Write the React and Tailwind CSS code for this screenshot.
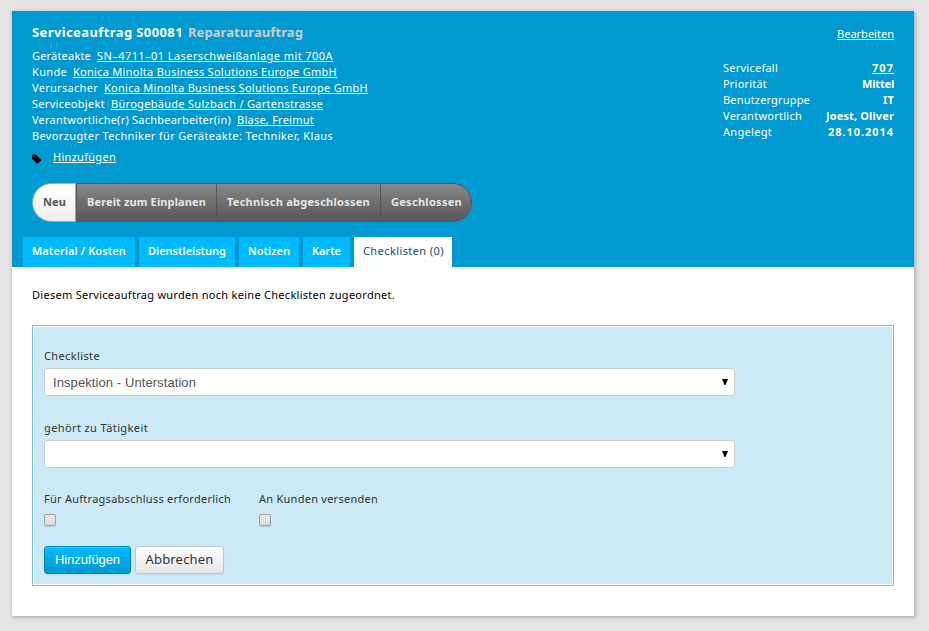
import React from 'react';

const records = [
  { label: 'Geräteakte', value: 'SN–4711–01 Laserschweißanlage mit 700A', l: 'w-[59px]', v: 'w-[236px]' },
  { label: 'Kunde', value: 'Konica Minolta Business Solutions Europe GmbH', l: 'w-[35px]', v: 'w-[264px]' },
  { label: 'Verursacher', value: 'Konica Minolta Business Solutions Europe GmbH', l: 'w-[66px]', v: 'w-[264px]' },
  { label: 'Serviceobjekt', value: 'Bürogebäude Sulzbach / Gartenstrasse', l: 'w-[73px]', v: 'w-[212px]' },
  { label: 'Verantwortliche(r) Sachbearbeiter(in)', value: 'Blase, Freimut', l: 'w-[199px]', v: 'w-[77px]' },
];

const facts = [
  { label: 'Servicefall', value: '707', l: 'w-[55px]', v: 'w-[22px] underline' },
  { label: 'Priorität', value: 'Mittel', l: 'w-[44px]', v: 'w-[32px]' },
  { label: 'Benutzergruppe', value: 'IT', l: 'w-[87px]', v: 'w-[11px]' },
  { label: 'Verantwortlich', value: 'Joest, Oliver', l: 'w-[79px]', v: 'w-[68px]' },
  { label: 'Angelegt', value: '28.10.2014', l: 'w-[49px]', v: 'w-[66px]' },
];

const tabs = [
  { label: 'Material / Kosten', box: 'w-[112px]', text: 'w-[94px]' },
  { label: 'Dienstleistung', box: 'w-[96px]', text: 'w-[78px]' },
  { label: 'Notizen', box: 'w-[60px]', text: 'w-[42px]' },
  { label: 'Karte', box: 'w-[47px]', text: 'w-[29px]' },
];

// Spreads a label's letters so that it fills the width given by its class.
function Label({ children, className = '' }) {
  const box = React.useRef(null);
  const [spacing, setSpacing] = React.useState(0);
  React.useLayoutEffect(() => {
    const el = box.current;
    const natural = el.firstChild.getBoundingClientRect().width;
    setSpacing((el.clientWidth - natural) / children.length);
  }, [children]);
  return (
    <span ref={box} className={`block shrink-0 whitespace-nowrap ${className}`}>
      <span style={{ letterSpacing: `${spacing}px` }}>{children}</span>
    </span>
  );
}

function Select({ children }) {
  return (
    <div className="flex h-7 w-[691px] items-center justify-between rounded-[3px] border border-[#ccc] bg-white pl-2 pr-[6px] font-['Liberation_Sans',sans-serif] text-[13px] text-[#555]">
      <Label className={children ? 'w-[143px] pt-[2px]' : 'w-0'}>{children || ' '}</Label>
      <svg width="6" height="6" viewBox="0 0 6 6"><path d="M0 0H6L3.5 6H2.5Z" fill="#000" /></svg>
    </div>
  );
}

function Checkbox({ children, width }) {
  return (
    <div>
      <Label className={width}>{children}</Label>
      <div className="mt-[7px] h-3 w-3 rounded-[2px] border border-[#a0a0a0] bg-linear-to-b from-[#ececec] to-[#d9d9d9] shadow-[0_1px_1px_rgba(0,0,0,0.12)]" />
    </div>
  );
}

export default function App() {
  return (
    <div className="h-[631px] bg-[#e4e4e4] pl-3 pt-[11px] font-['Noto_Sans',sans-serif] text-[11px] leading-4">
      <main className="h-[605px] w-[902px] bg-white shadow-[1px_1px_4px_rgba(0,0,0,0.3)]">
        <header className="flex h-64 flex-col bg-[#0099d0] text-white">
          <div className="flex h-[172px] justify-between px-5 pt-[13px]">
            <div>
              <h1 className="mb-2 flex gap-[5px] text-[13px] font-bold leading-4">
                <Label className="w-[151px]">Serviceauftrag S00081</Label>
                <Label className="w-[115px] text-[#ccc]">Reparaturauftrag</Label>
              </h1>
              {records.map((r) => (
                <div key={r.label} className="flex gap-[6px]">
                  <Label className={r.l}>{r.label}</Label>
                  <Label className={`underline underline-offset-1 ${r.v}`}>{r.value}</Label>
                </div>
              ))}
              <Label className="w-[301px]">Bevorzugter Techniker für Geräteakte: Techniker, Klaus</Label>
              <div className="mt-[5px] flex items-center gap-3">
                <svg className="mt-[3px]" width="9" height="10" viewBox="0 0 9 10">
                  <path fillRule="evenodd" d="M0 1.2L.8.5H4L9 5.8V6.5L5.8 9.5H5L0 4.7ZM1.2 1.6V2.7H2.3V1.6Z" fill="#000" />
                </svg>
                <Label className="w-[63px] underline underline-offset-1">Hinzufügen</Label>
              </div>
            </div>
            <div className="flex w-[171px] flex-col pt-[2px]">
              <div className="mb-[18px] flex justify-end">
                <Label className="w-[57px] underline underline-offset-1">Bearbeiten</Label>
              </div>
              {facts.map((f) => (
                <div key={f.label} className="flex justify-between">
                  <Label className={f.l}>{f.label}</Label>
                  <Label className={`font-bold underline-offset-1 ${f.v}`}>{f.value}</Label>
                </div>
              ))}
            </div>
          </div>
          <div className="ml-5 flex h-[39px] w-[440px] font-bold text-[#e6e6e6]">
            <div className="flex w-11 items-center rounded-l-[20px] border border-[#aaa] bg-linear-to-b from-white to-[#eee] pb-[2px] pl-[10px] text-[#555]">
              <Label className="w-[23px]">Neu</Label>
            </div>
            <div className="flex w-[396px] rounded-r-[20px] border border-[#555] bg-linear-to-b from-[#888] to-[#575757]">
              <div className="flex w-[140px] items-center border-r border-[#555] pb-[2px] pl-[10px]">
                <Label className="w-[119px]">Bereit zum Einplanen</Label>
              </div>
              <div className="flex w-[164px] items-center border-r border-[#555] pb-[2px] pl-[10px]">
                <Label className="w-[143px]">Technisch abgeschlossen</Label>
              </div>
              <div className="flex items-center pb-[2px] pl-[10px]">
                <Label className="w-[71px]">Geschlossen</Label>
              </div>
            </div>
          </div>
          <nav className="ml-[11px] mt-[15px] flex gap-1">
            {tabs.map((t) => (
              <div key={t.label} className={`h-[30px] bg-[#00baff] px-[9px] pt-[6px] font-semibold ${t.box}`}>
                <Label className={t.text}>{t.label}</Label>
              </div>
            ))}
            <div className="h-[30px] w-[98px] bg-white px-[9px] pt-[6px] text-[#174b62]">
              <Label className="w-[81px]">Checklisten (0)</Label>
            </div>
          </nav>
        </header>
        <section className="px-5 pt-5 text-black">
          <Label className="w-[363px]">Diesem Serviceauftrag wurden noch keine Checklisten zugeordnet.</Label>
          <div className="mt-[22px] h-[261px] border border-[#76c5df] bg-white p-px text-[#333]">
            <div className="h-full bg-[#cceaf5] pl-[10px] pt-[21px]">
              <Label className="mb-1 w-[56px]">Checkliste</Label>
              <Select>Inspektion - Unterstation</Select>
              <Label className="mb-1 mt-6 w-[104px]">gehört zu Tätigkeit</Label>
              <Select />
              <div className="mt-[23px] flex gap-7">
                <Checkbox width="w-[187px]">Für Auftragsabschluss erforderlich</Checkbox>
                <Checkbox width="w-[119px]">An Kunden versenden</Checkbox>
              </div>
              <div className="mt-5 flex gap-1 text-[13px]">
                <button className="flex h-7 w-[87px] items-center justify-center rounded-[3px] border border-[#0086b6] bg-linear-to-b from-[#00baff] to-[#0099d0] font-['Liberation_Sans',sans-serif] text-white shadow-[inset_0_1px_0_rgba(255,255,255,0.2),0_1px_2px_rgba(0,0,0,0.05)]">
                  <Label className="w-[65px]">Hinzufügen</Label>
                </button>
                <button className="flex h-7 w-[89px] items-center justify-center rounded-[3px] border border-[#c5c5c5] bg-linear-to-b from-white to-[#e6e6e6] pb-[2px] text-[#333] shadow-[0_1px_2px_rgba(0,0,0,0.05)]">
                  <Label className="w-[68px]">Abbrechen</Label>
                </button>
              </div>
            </div>
          </div>
        </section>
      </main>
    </div>
  );
}
